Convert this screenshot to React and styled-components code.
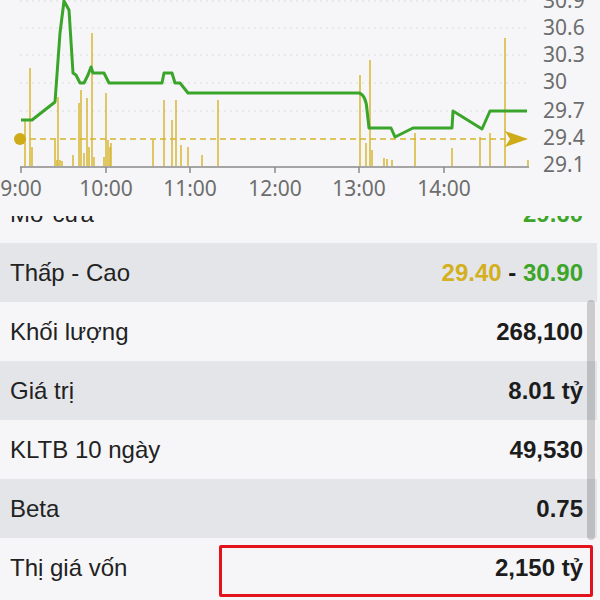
import React from "react";
import styled, { createGlobalStyle } from "styled-components";

const GlobalStyle = createGlobalStyle`
  html, body {
    margin: 0;
    padding: 0;
    background: #f6f6f8;
  }
  body {
    font-family: "Liberation Sans", Arial, sans-serif;
    overflow: hidden;
  }
`;

const Page = styled.div`
  width: 600px;
  height: 600px;
  overflow: hidden;
  display: flex;
  flex-direction: column;
  background: #f6f6f8;
`;

const ChartBox = styled.div`
  height: 216px;
  flex: none;

  svg {
    display: block;
  }

  text {
    font-family: "Noto Sans", "Open Sans", sans-serif;
    font-size: 21px;
    fill: #6d6d6d;
  }
`;

const ListViewport = styled.div`
  position: relative;
  flex: 1;
  overflow: hidden;
  margin-right: 3px;
`;

// the list is scrolled: the first row sits partly under the chart
const List = styled.div`
  margin-top: -32px;
`;

const Row = styled.div`
  position: relative;
  height: 59px;
  display: flex;
  align-items: center;
  justify-content: space-between;
  padding: 0 14px 0 10px;
  background: ${({ $shade }) => ($shade ? "#e3e5e9" : "#f6f6f8")};
`;

const Label = styled.span`
  font-size: 24px;
  color: #222;
`;

const Value = styled.span`
  font-size: 24px;
  font-weight: bold;
  color: #1c1c1c;
`;

const Tone = styled.span`
  color: ${({ $tone }) => ($tone === "low" ? "#d4b01e" : "#3da62a")};
`;

const Highlight = styled.div`
  position: absolute;
  left: 219px;
  right: 4px;
  top: 7px;
  height: 52px;
  box-sizing: border-box;
  border: 3px solid #e3131b;
  border-radius: 2px;
  pointer-events: none;
`;

const Thumb = styled.div`
  position: absolute;
  right: 2px;
  top: 84px;
  width: 8px;
  height: 240px;
  border-radius: 4px;
  background: rgba(0, 0, 0, 0.17);
`;

const GREEN = "#3aa52a";
const GOLD = "#d6b52a";

// x position / top of each volume bar (baseline is y=166)
const bars = [
  [25, 120], [30, 68], [32, 147], [55, 140], [57, 160], [58, 97], [60, 160], [62, 161],
  [73, 155], [79, 103], [81, 90], [84, 153], [87, 98], [89, 147], [92, 33], [94, 157],
  [104, 157], [106, 93], [108, 140], [110, 147], [111, 143], [153, 140], [164, 100],
  [172, 120], [176, 100], [181, 145], [188, 147], [202, 155], [218, 100],
  [360, 75], [366, 143], [370, 60], [372, 150], [384, 158], [387, 159], [392, 160],
  [415, 133], [452, 148], [480, 137], [490, 133], [505, 38], [528, 160],
];

const grid = [1, 28, 55, 83, 111];

const priceLabels = [
  ["30.9", 0], ["30.6", 27], ["30.3", 54], ["30", 81],
  ["29.7", 110], ["29.4", 137], ["29.1", 164],
];

const hours = [
  ["9:00", 21], ["10:00", 106], ["11:00", 190],
  ["12:00", 275], ["13:00", 359], ["14:00", 444],
];

const pricePath =
  "M21 120 L32 120 L55 102 L60 33 L64 1 L69 10 L73 73 L76 75 L80 83 L84 83 L88 75 " +
  "L91 67 L93 73 L104 73 L109 83 L162 83 L164 73 L172 73 L175 83 L180 83 L188 93 " +
  "L359 93 Q366 95 367 110 L369 128 L391 128 L395 137 L413 128 L452 128 L453 111 " +
  "L482 129 L490 111 L527 111";

const IntradayChart = () => (
  <ChartBox>
    <svg width="600" height="216" viewBox="0 0 600 216">
      {grid.map((y) => (
        <line key={y} x1="20" x2="528" y1={y} y2={y} stroke="#dcdce0" strokeWidth="1.2" strokeDasharray="2 4" />
      ))}
      {bars.map(([x, top], i) => (
        <line key={i} x1={x} x2={x} y1="166" y2={top} stroke={GOLD} strokeWidth="1.6" opacity="0.9" />
      ))}
      <line x1="20" x2="528" y1="139" y2="139" stroke={GOLD} strokeWidth="1.6" strokeDasharray="6 4" />
      <circle cx="20" cy="139" r="6" fill="#d0ab18" />
      <polygon points="505,131 528,139 505,147 510,139" fill="#d0ab18" />
      <path d={pricePath} fill="none" stroke={GREEN} strokeWidth="3" strokeLinejoin="round" />
      <line x1="20" x2="529" y1="167" y2="167" stroke="#8a8a8a" strokeWidth="1.5" />
      {hours.map(([t, x]) => (
        <g key={t}>
          <line x1={x} x2={x} y1="167" y2="173" stroke="#8a8a8a" strokeWidth="1.5" />
          <text x={x} y="196" textAnchor="middle">{t}</text>
        </g>
      ))}
      {priceLabels.map(([p, y]) => (
        <text key={p} x="543" y={y} dominantBaseline="central">{p}</text>
      ))}
    </svg>
  </ChartBox>
  
);

const App = () => (
  <Page>
    <GlobalStyle />
    <IntradayChart />
    <ListViewport>
      <List>
        <Row>
          <Label>Mở cửa</Label>
          <Value><Tone $tone="high">29.60</Tone></Value>
        </Row>
        <Row $shade>
          <Label>Thấp - Cao</Label>
          <Value>
            <Tone $tone="low">29.40</Tone> - <Tone $tone="high">30.90</Tone>
          </Value>
        </Row>
        <Row>
          <Label>Khối lượng</Label>
          <Value>268,100</Value>
        </Row>
        <Row $shade>
          <Label>Giá trị</Label>
          <Value>8.01 tỷ</Value>
        </Row>
        <Row>
          <Label>KLTB 10 ngày</Label>
          <Value>49,530</Value>
        </Row>
        <Row $shade>
          <Label>Beta</Label>
          <Value>0.75</Value>
        </Row>
        <Row>
          <Label>Thị giá vốn</Label>
          <Value>2,150 tỷ</Value>
          <Highlight />
        </Row>
      </List>
      <Thumb />
    </ListViewport>
  </Page>
);

export default App;
